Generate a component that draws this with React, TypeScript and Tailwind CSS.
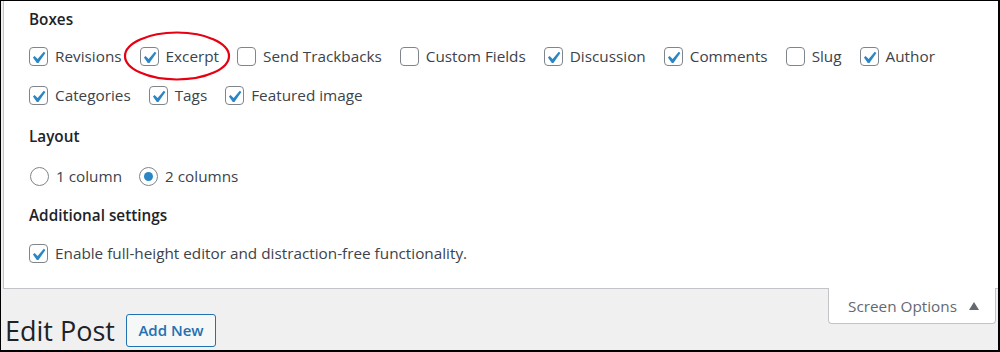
import React from "react";

const font = { fontFamily: '"Open Sans", "Noto Sans", sans-serif' };

function Check({ checked }: { checked: boolean }) {
  return (
    <span className="relative w-[19px] h-[19px] rounded-[4px] border border-[#80858b] bg-white shrink-0">
      {checked && (
        <svg className="absolute left-[-4px] top-[-2px]" width="24" height="24" viewBox="0 0 20 20">
          <path d="M14.83 4.89l1.34.94-5.81 8.38H9.02L5.78 9.67l1.34-1.25 2.57 2.4z" fill="#2a86c4" />
        </svg>
      )}
    </span>
  );
}

function Item({ label, checked }: { label: string; checked: boolean }) {
  return (
    <div className="flex items-center gap-[7px] mr-[18px] h-[20px]">
      <Check checked={checked} />
      <span className="text-[15.3px] text-[#3c434a] leading-[20px] whitespace-nowrap">{label}</span>
    </div>
  );
}

function Radio({ label, checked }: { label: string; checked: boolean }) {
  return (
    <div className="flex items-center gap-[7px] mr-[17px] h-[20px]">
      <span className="w-[19px] h-[19px] rounded-full border border-[#80858b] bg-white flex items-center justify-center shrink-0">
        {checked && <span className="w-[9px] h-[9px] rounded-full bg-[#2a86c4]" />}
      </span>
      <span className="text-[15.3px] text-[#3c434a] leading-[20px] whitespace-nowrap">{label}</span>
    </div>
  );
}

function Heading({ children }: { children: React.ReactNode }) {
  return <div className="text-[15.3px] font-semibold text-[#1d2327] leading-[20px]">{children}</div>;
}

export default function App() {
  return (
    <div
      className="relative w-[1000px] h-[352px] overflow-hidden bg-[#f0f0f1] border-t border-l border-r-2 border-b-2 border-black flex flex-col"
      style={font}
    >
      <div className="ml-[2px] h-[288px] shrink-0 bg-white border-l border-b border-[#c3c4c7] pl-[25px] pt-[8px]">
        <Heading>Boxes</Heading>
        <div className="flex mt-[17px]">
          <Item label="Revisions" checked />
          <Item label="Excerpt" checked />
          <Item label="Send Trackbacks" checked={false} />
          <Item label="Custom Fields" checked={false} />
          <Item label="Discussion" checked />
          <Item label="Comments" checked />
          <Item label="Slug" checked={false} />
          <Item label="Author" checked />
        </div>
        <div className="flex mt-[19px]">
          <Item label="Categories" checked />
          <Item label="Tags" checked />
          <Item label="Featured image" checked />
        </div>
        <div className="mt-[21px]">
          <Heading>Layout</Heading>
        </div>
        <div className="flex mt-[20px] ml-px">
          <Radio label="1 column" checked={false} />
          <Radio label="2 columns" checked />
        </div>
        <div className="mt-[19px]">
          <Heading>Additional settings</Heading>
        </div>
        <div className="flex mt-[18px]">
          <Item label="Enable full-height editor and distraction-free functionality." checked />
        </div>
      </div>

      <div className="flex justify-between items-start">
        <div className="flex items-center pt-[25px] pl-[4px]">
          <h1 className="text-[27px] leading-[33px] text-[#1d2327] font-normal">Edit Post</h1>
          <button className="ml-[11px] w-[90px] h-[33px] flex items-center justify-center rounded-[3px] border border-[#2271b1] bg-[#f6f7f7] text-[15px] font-semibold text-[#2271b1]">
            Add New
          </button>
        </div>
        <div className="-mt-px mr-[2px] w-[168px] h-[36px] bg-white border-l border-r border-b border-[#c3c4c7] rounded-b-[4px] flex items-center pl-[19px] gap-[12px]">
          <span className="text-[15.3px] text-[#646970] leading-[20px]">Screen Options</span>
          <svg width="10" height="8" viewBox="0 0 10 8">
            <path d="M0 8 L5 0 L10 8 Z" fill="#646970" />
          </svg>
        </div>
      </div>

      <svg className="absolute left-0 top-0 pointer-events-none" width="1000" height="352">
        <ellipse cx="176" cy="55" rx="52" ry="23.5" fill="none" stroke="#e60012" strokeWidth="2.2" />
      </svg>
    </div>
  );
}
